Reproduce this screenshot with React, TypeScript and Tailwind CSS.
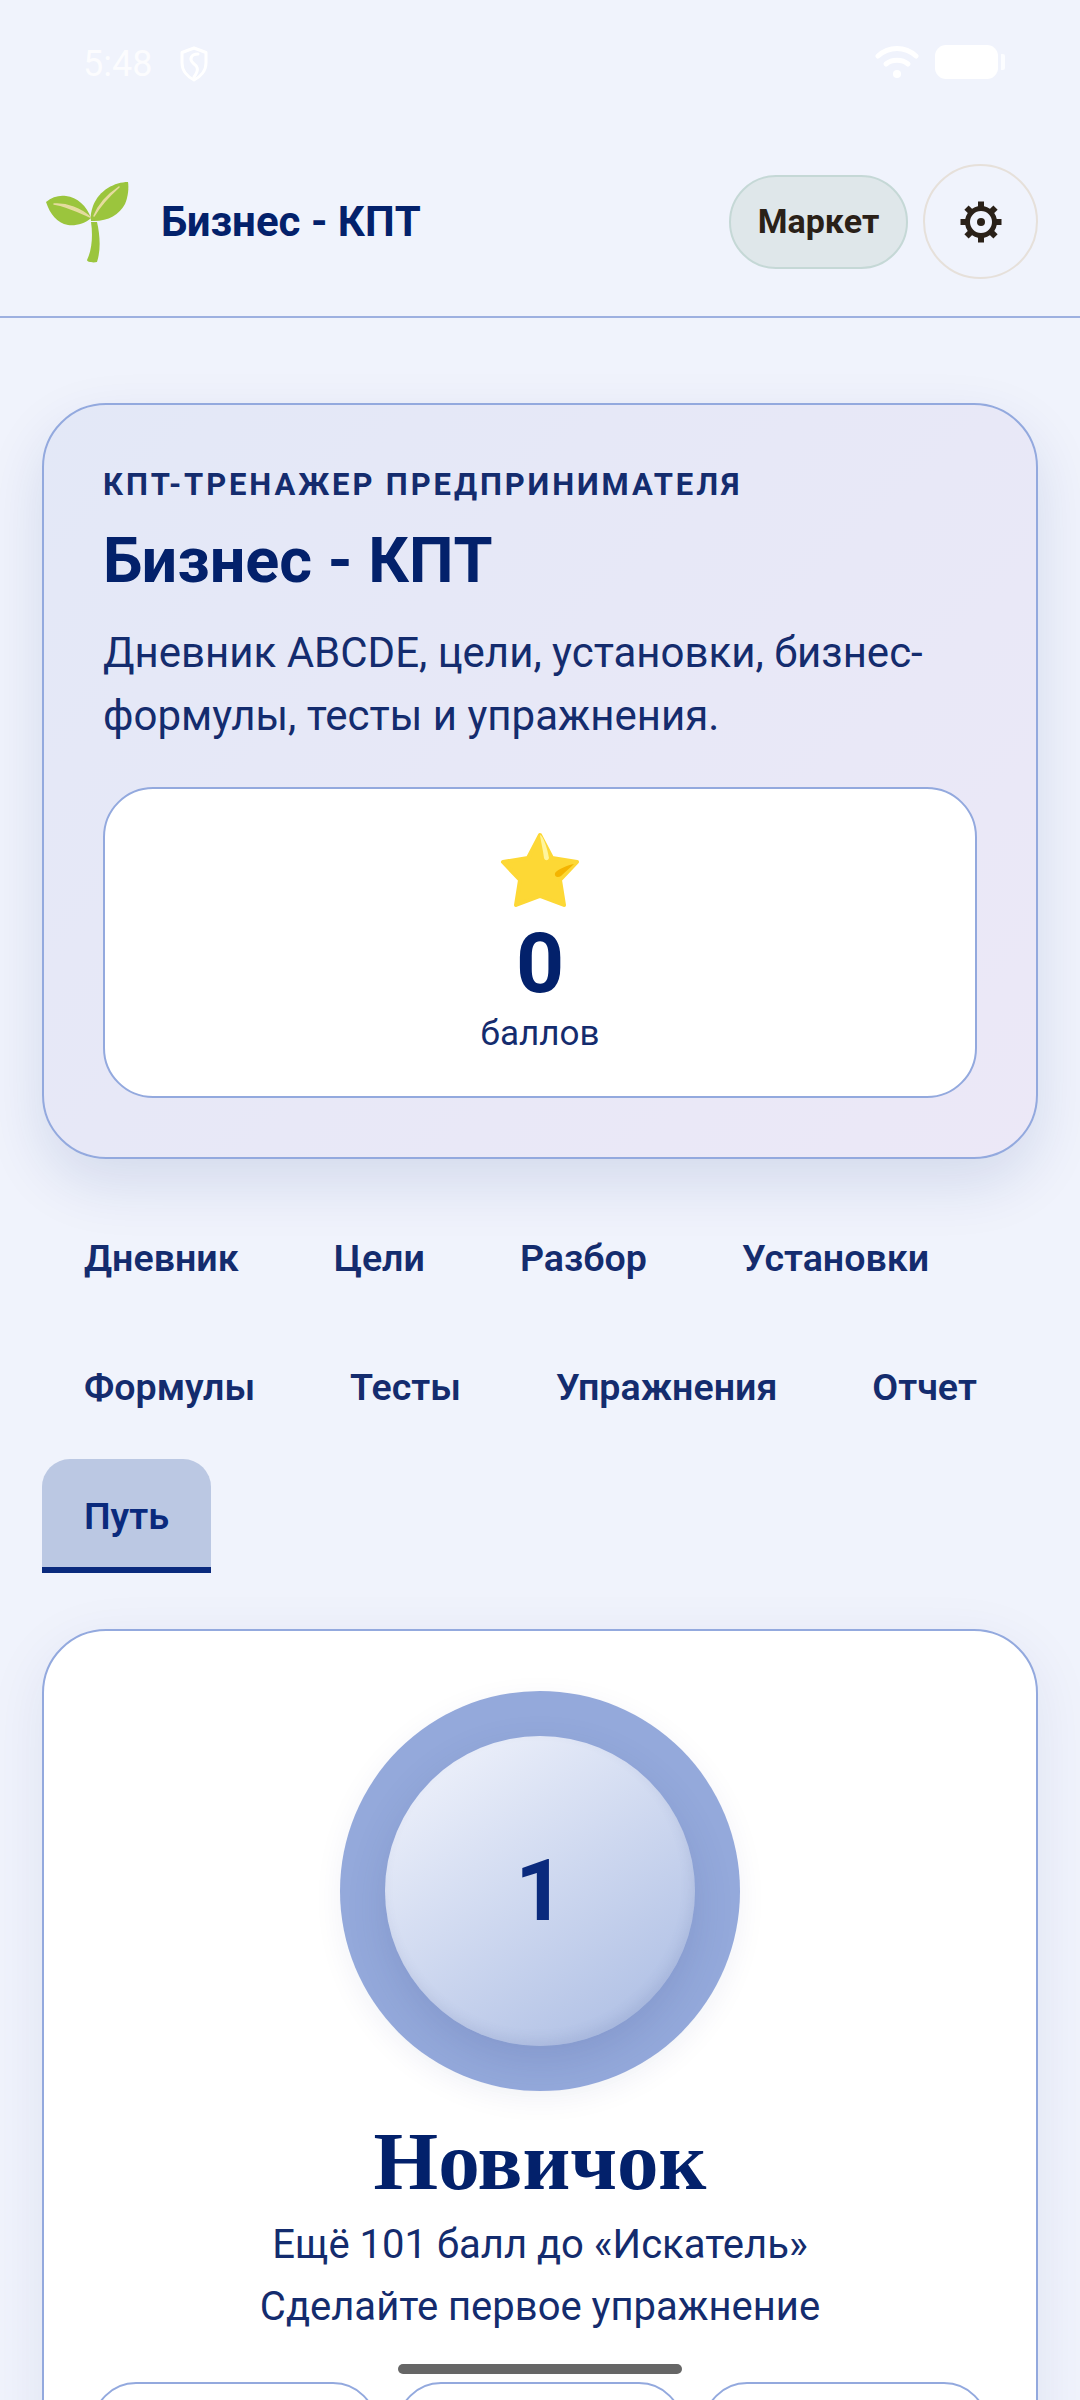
import { Fragment } from 'react';

const TABS = ['Дневник', 'Цели', 'Разбор', 'Установки', 'Формулы', 'Тесты', 'Упражнения', 'Отчет', 'Путь'];
const ACTIVE_TAB = 'Путь';

function ShieldIcon() {
  return (
    <svg width="30" height="36" viewBox="0 0 30 36" fill="none" stroke="#fff" strokeWidth="3" strokeLinecap="round" strokeLinejoin="round">
      <path d="M15 2 L27 6.5 V17 C27 25 21 31 15 34 C9 31 3 25 3 17 V6.5 Z" />
      <path d="M19 8 C12 8 10 13 14 17 C18 20 21 23 15 31" />
    </svg>
  );
}

function WifiIcon() {
  return (
    <svg width="44" height="34" viewBox="0 0 44 34" fill="none" stroke="#fff" strokeWidth="5" strokeLinecap="round">
      <path d="M3 11 C14 1 30 1 41 11" />
      <path d="M11 19 C17 14 27 14 33 19" />
      <circle cx="22" cy="29" r="4" fill="#fff" stroke="none" />
    </svg>
  );
}

function Sprout() {
  return (
    <svg width="90" height="90" viewBox="20 27 90 90">
      <path d="M72 72 C74 85 73 100 68 110 C68 112 74 113 78 112 C82 100 81 85 78 72 Z" fill="#9bc53d" />
      <path d="M27 52 C33 47 40 45 47 46 C58 47 68 56 72 68 C66 74 56 76 49 75 C38 73 31 64 27 52 Z" fill="#9bc53d" />
      <path d="M109 32 C96 32 80 40 74 56 C72 62 71 67 72 71 C88 72 100 65 106 54 C109 47 110 38 109 32 Z" fill="#9bc53d" />
      <path d="M35 54 C48 53 62 59 71 67 C60 62 48 56 35 54 Z" fill="#e5dc9f" stroke="#e5dc9f" strokeWidth="1.5" strokeLinejoin="round" />
      <path d="M100 37 C88 45 79 56 75 66 C81 56 90 46 100 37 Z" fill="#e5dc9f" stroke="#e5dc9f" strokeWidth="1.5" strokeLinejoin="round" />
    </svg>
  );
}

function GearIcon() {
  const teeth = [0, 45, 90, 135, 180, 225, 270, 315];
  return (
    <svg width="42" height="42" viewBox="0 0 42 42" fill="none">
      {teeth.map(deg => (
        <rect key={deg} x="18" y="0.5" width="6" height="8" fill="#2a2118" transform={`rotate(${deg} 21 21)`} />
      ))}
      <circle cx="21" cy="21" r="13.5" stroke="#2a2118" strokeWidth="5" />
      <circle cx="21" cy="21" r="4" fill="#2a2118" />
    </svg>
  );
}

function StarIcon() {
  return (
    <svg width="82" height="80" viewBox="59 31 82 80">
      <path
        d="M100 35 L112 58 L137 62 L120 80 L124 105 L100 96 L76 105 L80 80 L63 62 L88 58 Z"
        fill="#fdd835"
        stroke="#fdd835"
        strokeWidth="4"
        strokeLinejoin="round"
      />
      <path d="M100 35 C103 35 108 50 109 58 C108 61 105 61 104 58 C103 50 101 42 100 35 Z" fill="#fff59d" />
      <path d="M134 64 C128 65 118 69 115 73 C114 77 118 78 121 76 C125 72 130 68 134 64 Z" fill="#f4b400" />
    </svg>
  );
}

export default function App() {
  return (
    <div className="relative h-[2400px] w-[1080px] overflow-hidden bg-[#f0f3fc] font-['Roboto',sans-serif] text-[#142c6e]">
      {/* Status bar */}
      <div className="flex h-[96px] items-start justify-between pl-[83px] pr-[75px] pt-[45px] text-white">
        <div className="flex items-center gap-[27px]">
          <span className="text-[36px] leading-[38px] opacity-80">5:48</span>
          <ShieldIcon />
        </div>
        <div className="flex items-center gap-[16px]">
          <WifiIcon />
          <div className="flex items-center gap-[3px]">
            <div className="h-[34px] w-[63px] rounded-[11px] bg-white" />
            <div className="h-[16px] w-[4px] rounded-r-[2px] bg-white opacity-80" />
          </div>
        </div>
      </div>

      {/* Header */}
      <header className="flex items-center justify-between border-b-2 border-[#9db0e0] pb-[37px] pl-[39px] pr-[42px] pt-[68px]">
        <div className="flex items-center gap-[32px]">
          <Sprout />
          <span className="text-[42px] font-bold leading-[48px] text-[#03216b]">Бизнес - КПТ</span>
        </div>
        <div className="flex items-center gap-[15px]">
          <button className="flex h-[94px] w-[179px] items-center justify-center rounded-full border-2 border-[#c5d8d6] bg-[#dfe7ea] text-[34px] font-bold text-[#2a2118]">
            Маркет
          </button>
          <button className="flex h-[115px] w-[115px] items-center justify-center rounded-full border-2 border-[#e6e0da]">
            <GearIcon />
          </button>
        </div>
      </header>

      <main className="px-[42px] pt-[85px]">
        {/* Hero */}
        <section className="h-[756px] rounded-[64px] border-2 border-[#93a9de] bg-linear-[135deg,#e3e8f7,#ece8f7] px-[59px] pt-[60px] shadow-[0_24px_60px_rgba(10,40,120,0.12)]">
          <div className="text-[31px] font-bold leading-[40px] tracking-[2.9px]">КПТ-ТРЕНАЖЕР ПРЕДПРИНИМАТЕЛЯ</div>
          <h1 className="mt-[18px] text-[63px] font-bold leading-[76px] text-[#03216b]">Бизнес - КПТ</h1>
          <p className="mt-[22px] text-[42px] leading-[63px]">Дневник ABCDE, цели, установки, бизнес-формулы, тесты и упражнения.</p>
          <div className="mt-[40px] flex h-[311px] flex-col items-center rounded-[50px] border-2 border-[#93a9de] bg-white pt-[42px]">
            <StarIcon />
            <div className="mt-[11px] text-[84px] font-bold leading-[84px] text-[#03216b]">0</div>
            <div className="mt-[4px] text-[35px] leading-[48px]">баллов</div>
          </div>
        </section>

        {/* Tabs */}
        <nav className="mt-[42px] flex flex-wrap gap-x-[11px] gap-y-[15px]">
          {TABS.map(tab => (
            <Fragment key={tab}>
              {tab === ACTIVE_TAB ? (
                <button className="h-[114px] rounded-t-[28px] border-y-[6px] border-t-transparent border-b-[#0a2a7d] bg-[#bbc8e3] px-[42px] text-[37.6px] font-semibold text-[#0a2a7d]">
                  {tab}
                </button>
              ) : (
                <button className="h-[114px] border-y-[6px] border-transparent px-[42px] text-[37.6px] font-semibold">{tab}</button>
              )}
            </Fragment>
          ))}
        </nav>

        {/* Level card */}
        <section className="mt-[56px] rounded-[64px] border-2 border-[#93a9de] bg-white px-[58px] pt-[60px] shadow-[0_16px_60px_rgba(10,40,120,0.08)]">
          <div className="flex justify-center">
            <div className="flex h-[400px] w-[400px] items-center justify-center rounded-full bg-[#94a9db] shadow-[0_8px_30px_rgba(10,40,120,0.06)]">
              <div className="flex h-[310px] w-[310px] items-center justify-center rounded-full bg-linear-[145deg,#f4f6fd,#a8bae2] shadow-[0_16px_40px_rgba(40,60,120,0.14),inset_-3px_-6px_12px_rgba(70,90,150,0.12)]">
                <span className="text-[86px] font-bold leading-none text-[#0a2a7d]">1</span>
              </div>
            </div>
          </div>
          <h2 className="mt-[24px] text-center font-['Liberation_Serif',serif] text-[83px] font-bold leading-[92px] text-[#03216b]">Новичок</h2>
          <p className="mt-[7px] text-center text-[40px] leading-[62px]">Ещё 101 балл до «Искатель»</p>
          <p className="text-center text-[40px] leading-[62px]">Сделайте первое упражнение</p>
          <div className="-mx-[10px] mt-[44px] grid grid-cols-3 gap-[20px]">
            <div className="h-[180px] rounded-[44px] border-2 border-[#93a9de]" />
            <div className="h-[180px] rounded-[44px] border-2 border-[#93a9de]" />
            <div className="h-[180px] rounded-[44px] border-2 border-[#93a9de]" />
          </div>
        </section>
      </main>

      {/* Home indicator */}
      <div className="absolute bottom-[26px] left-[398px] h-[10px] w-[284px] rounded-full bg-[#666666]" />
    </div>
  );
}
